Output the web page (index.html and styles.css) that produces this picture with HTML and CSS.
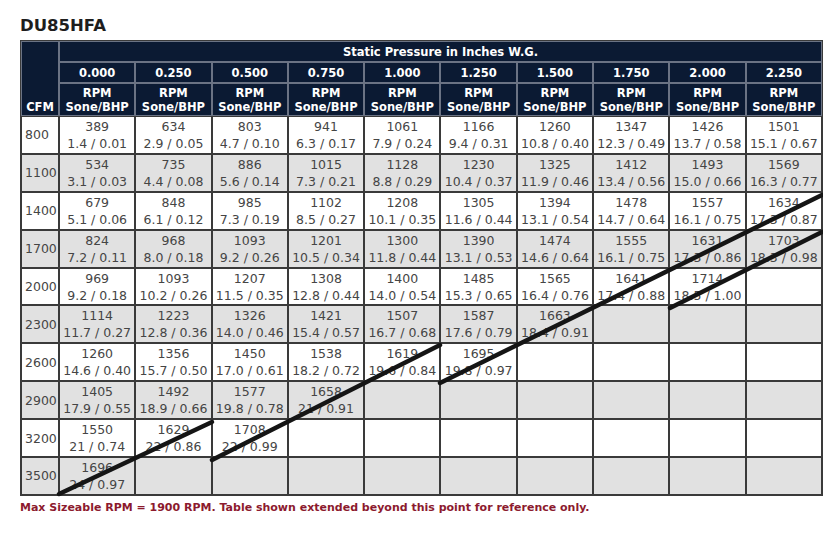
FILE: index.html
```html
<!DOCTYPE html>
<html lang="en">
<head>
<meta charset="utf-8">
<title>DU85HFA</title>
<link rel="stylesheet" href="styles.css">
</head>
<body>
<h1 class="title">DU85HFA</h1>
<div class="chart">
<table class="fan">
<colgroup><col class="c-cfm"><col><col><col><col><col><col><col><col><col><col></colgroup>
<thead>
<tr class="h1"><th rowspan="3" class="cfm-head">CFM</th><th colspan="10">Static Pressure in Inches W.G.</th></tr>
<tr class="h2"><th>0.000</th><th>0.250</th><th>0.500</th><th>0.750</th><th>1.000</th><th>1.250</th><th>1.500</th><th>1.750</th><th>2.000</th><th>2.250</th></tr>
<tr class="h3"><th>RPM<br>Sone/BHP</th><th>RPM<br>Sone/BHP</th><th>RPM<br>Sone/BHP</th><th>RPM<br>Sone/BHP</th><th>RPM<br>Sone/BHP</th><th>RPM<br>Sone/BHP</th><th>RPM<br>Sone/BHP</th><th>RPM<br>Sone/BHP</th><th>RPM<br>Sone/BHP</th><th>RPM<br>Sone/BHP</th></tr>
</thead>
<tbody>
<tr><td class="cfm">800</td><td>389<br>1.4 / 0.01</td><td>634<br>2.9 / 0.05</td><td>803<br>4.7 / 0.10</td><td>941<br>6.3 / 0.17</td><td>1061<br>7.9 / 0.24</td><td>1166<br>9.4 / 0.31</td><td>1260<br>10.8 / 0.40</td><td>1347<br>12.3 / 0.49</td><td>1426<br>13.7 / 0.58</td><td>1501<br>15.1 / 0.67</td></tr>
<tr><td class="cfm">1100</td><td>534<br>3.1 / 0.03</td><td>735<br>4.4 / 0.08</td><td>886<br>5.6 / 0.14</td><td>1015<br>7.3 / 0.21</td><td>1128<br>8.8 / 0.29</td><td>1230<br>10.4 / 0.37</td><td>1325<br>11.9 / 0.46</td><td>1412<br>13.4 / 0.56</td><td>1493<br>15.0 / 0.66</td><td>1569<br>16.3 / 0.77</td></tr>
<tr><td class="cfm">1400</td><td>679<br>5.1 / 0.06</td><td>848<br>6.1 / 0.12</td><td>985<br>7.3 / 0.19</td><td>1102<br>8.5 / 0.27</td><td>1208<br>10.1 / 0.35</td><td>1305<br>11.6 / 0.44</td><td>1394<br>13.1 / 0.54</td><td>1478<br>14.7 / 0.64</td><td>1557<br>16.1 / 0.75</td><td>1634<br>17.3 / 0.87</td></tr>
<tr><td class="cfm">1700</td><td>824<br>7.2 / 0.11</td><td>968<br>8.0 / 0.18</td><td>1093<br>9.2 / 0.26</td><td>1201<br>10.5 / 0.34</td><td>1300<br>11.8 / 0.44</td><td>1390<br>13.1 / 0.53</td><td>1474<br>14.6 / 0.64</td><td>1555<br>16.1 / 0.75</td><td>1631<br>17.3 / 0.86</td><td>1703<br>18.3 / 0.98</td></tr>
<tr><td class="cfm">2000</td><td>969<br>9.2 / 0.18</td><td>1093<br>10.2 / 0.26</td><td>1207<br>11.5 / 0.35</td><td>1308<br>12.8 / 0.44</td><td>1400<br>14.0 / 0.54</td><td>1485<br>15.3 / 0.65</td><td>1565<br>16.4 / 0.76</td><td>1641<br>17.4 / 0.88</td><td>1714<br>18.5 / 1.00</td><td></td></tr>
<tr><td class="cfm">2300</td><td>1114<br>11.7 / 0.27</td><td>1223<br>12.8 / 0.36</td><td>1326<br>14.0 / 0.46</td><td>1421<br>15.4 / 0.57</td><td>1507<br>16.7 / 0.68</td><td>1587<br>17.6 / 0.79</td><td>1663<br>18.4 / 0.91</td><td></td><td></td><td></td></tr>
<tr><td class="cfm">2600</td><td>1260<br>14.6 / 0.40</td><td>1356<br>15.7 / 0.50</td><td>1450<br>17.0 / 0.61</td><td>1538<br>18.2 / 0.72</td><td>1619<br>19.6 / 0.84</td><td>1695<br>19.8 / 0.97</td><td></td><td></td><td></td><td></td></tr>
<tr><td class="cfm">2900</td><td>1405<br>17.9 / 0.55</td><td>1492<br>18.9 / 0.66</td><td>1577<br>19.8 / 0.78</td><td>1658<br>21 / 0.91</td><td></td><td></td><td></td><td></td><td></td><td></td></tr>
<tr><td class="cfm">3200</td><td>1550<br>21 / 0.74</td><td>1629<br>22 / 0.86</td><td>1708<br>22 / 0.99</td><td></td><td></td><td></td><td></td><td></td><td></td><td></td></tr>
<tr><td class="cfm">3500</td><td>1696<br>24 / 0.97</td><td></td><td></td><td></td><td></td><td></td><td></td><td></td><td></td><td></td></tr>
</tbody>
</table>
<svg class="limits" width="803" height="460" viewBox="0 0 803 460" aria-hidden="true">
<g stroke="#151515" stroke-width="4.5" stroke-linecap="round" fill="none">
<line x1="39" y1="454" x2="192" y2="382"/>
<line x1="192" y1="420" x2="420" y2="305"/>
<line x1="420" y1="343" x2="802" y2="155"/>
<line x1="650" y1="268" x2="802" y2="192"/>
</g>
</svg>
</div>
<p class="note">Max Sizeable RPM = 1900 RPM. Table shown extended beyond this point for reference only.</p>
</body>
</html>
```
FILE: styles.css
```css
html, body {
  margin: 0;
  padding: 0;
  background: #ffffff;
}
body {
  padding: 16px 20px 0 20px;
  font-family: "DejaVu Sans", Verdana, sans-serif;
}
.title {
  margin: 0 0 4px 0;
  font-size: 16.5px;
  line-height: 20px;
  font-weight: bold;
  color: #1e1e1e;
}
.chart {
  position: relative;
  width: 803px;
}
.fan {
  width: 803px;
  table-layout: fixed;
  border-collapse: separate;
  border-spacing: 0;
  border: 1px solid #3a3a3a;
}
.c-cfm {
  width: 38px;
}
.fan th {
  background: #0b1a33;
  color: #ffffff;
  font-weight: bold;
  font-size: 11.5px;
  line-height: 14px;
  border: 1px solid #6b7384;
  padding: 0;
  text-align: center;
  vertical-align: middle;
}
.fan th.cfm-head {
  vertical-align: bottom;
  padding-bottom: 1px;
}
.h1 { height: 21px; }
.h2 { height: 21px; }
.h3 { height: 33px; }
.fan td {
  border: 1px solid #3a3a3a;
  padding: 0;
  font-size: 12.5px;
  line-height: 17px;
  color: #454545;
  text-align: center;
  vertical-align: middle;
  white-space: nowrap;
}
.fan tbody tr { height: 37.9px; }
.fan tbody tr:nth-child(even) td { background: #e1e1e1; }
.fan td.cfm {
  text-align: left;
  padding-left: 3px;
}
.limits {
  position: absolute;
  left: 0;
  top: 0;
  pointer-events: none;
}
.note {
  margin: 5px 0 0 0;
  font-size: 11px;
  line-height: 14px;
  font-weight: bold;
  color: #8c1a2e;
}
```
